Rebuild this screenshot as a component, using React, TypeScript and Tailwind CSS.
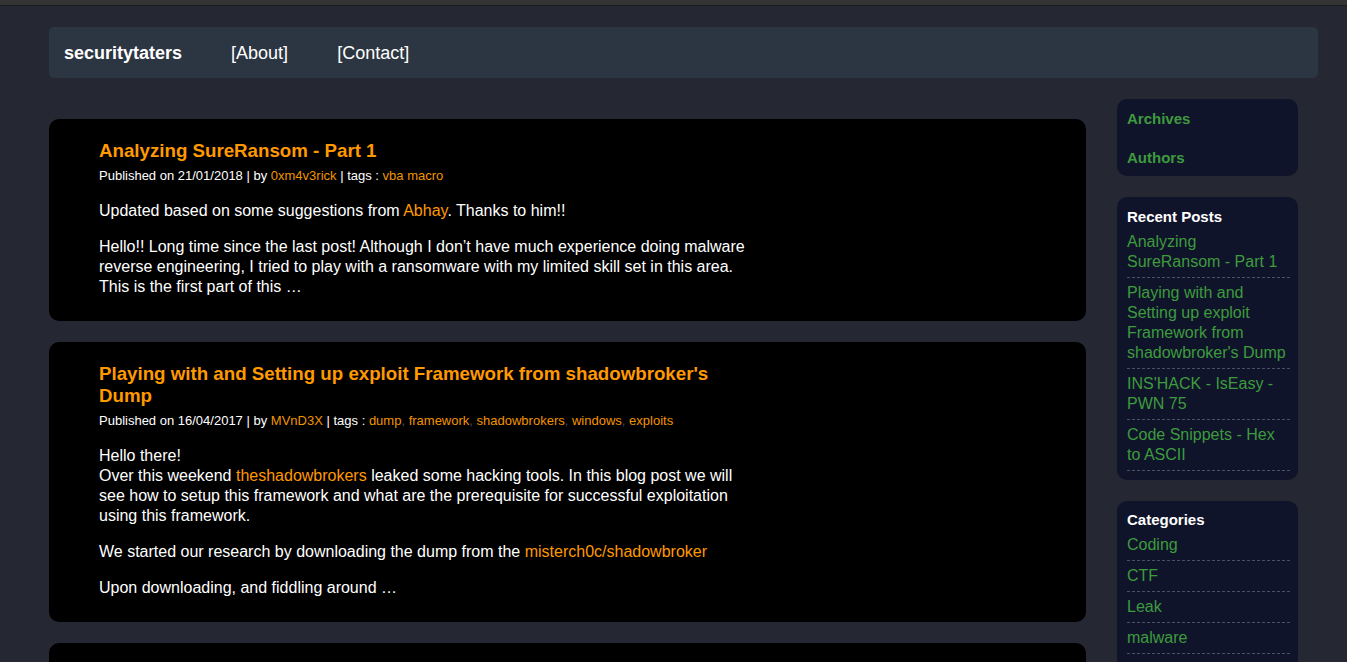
import React from "react";

const font = { fontFamily: '"Liberation Sans", Arial, sans-serif' };

function Tags({ tags }: { tags: string[] }) {
  return (
    <>
      {tags.map((t, i) => (
        <React.Fragment key={t}>
          <span className="text-[#f29400]">{t}</span>
          {i < tags.length - 1 && <span className="text-[#3b4a6b]">, </span>}
        </React.Fragment>
      ))}
    </>
  );
}

function Post({
  title,
  date,
  author,
  tags,
  children,
}: {
  title: string;
  date: string;
  author: string;
  tags: string[];
  children: React.ReactNode;
}) {
  return (
    <article className="bg-black rounded-[10px] pt-[21px] pb-[24px] pl-[50px] pr-[20px]">
      <div className="max-w-[652px]">
        <h3 className="text-[18.72px] leading-[22px] font-bold text-[#ff9900]">{title}</h3>
        <div className="mt-[6px] text-[13px] leading-[16px] text-white">
          Published on {date} | by <span className="text-[#f29400]">{author}</span> | tags :{" "}
          <Tags tags={tags} />
        </div>
        <div className="mt-[17px] flex flex-col gap-[16px] text-[16px] leading-[20px] text-white">
          {children}
        </div>
      </div>
    </article>
  );
}

function SideItem({ children }: { children: React.ReactNode }) {
  return (
    <div className="py-[5px] border-b border-dashed border-[#4a5064] text-[16px] leading-[20px] text-[#3d9b3d]">
      {children}
    </div>
  );
}

export default function App() {
  return (
    <div className="min-h-screen bg-[#252733]" style={font}>
      <div className="h-[6px] bg-[#343434] border-b border-[#1b1b1b]" />
      <div className="pl-[49px] pr-[29px] pt-[21px]">
        <nav className="h-[51px] bg-[#2c3642] rounded-[5px] flex items-center pl-[15px] pt-[2px] gap-[49px] text-white text-[18px]">
          <span className="font-bold">securitytaters</span>
          <span>[About]</span>
          <span>[Contact]</span>
        </nav>
        <div className="flex items-start gap-[31px] mt-[21px]">
          <main className="w-[1037px] flex flex-col gap-[21px] pt-[20px]">
            <Post title="Analyzing SureRansom - Part 1" date="21/01/2018" author="0xm4v3rick" tags={["vba macro"]}>
              <p>
                Updated based on some suggestions from <span className="text-[#ff9900]">Abhay</span>. Thanks to him!!
              </p>
              <p>
                Hello!! Long time since the last post! Although I don’t have much experience doing malware reverse
                engineering, I tried to play with a ransomware with my limited skill set in this area. This is the first
                part of this …
              </p>
            </Post>
            <Post
              title="Playing with and Setting up exploit Framework from shadowbroker's Dump"
              date="16/04/2017"
              author="MVnD3X"
              tags={["dump", "framework", "shadowbrokers", "windows", "exploits"]}
            >
              <p>
                Hello there!
                <br />
                Over this weekend <span className="text-[#ff9900]">theshadowbrokers</span> leaked some hacking tools. In
                this blog post we will see how to setup this framework and what are the prerequisite for successful
                exploitation using this framework.
              </p>
              <p>
                We started our research by downloading the dump from the{" "}
                <span className="text-[#ff9900]">misterch0c/shadowbroker</span>
              </p>
              <p>Upon downloading, and fiddling around …</p>
            </Post>
            <Post title="INS'HACK - IsEasy - PWN 75" date="10/04/2017" author="MVnD3X" tags={["ctf", "pwn"]}>
              <p>Write-up for the IsEasy challenge from INS'HACK …</p>
            </Post>
          </main>
          <aside className="w-[181px] flex flex-col gap-[21px]">
            <div className="bg-[#10142a] rounded-[10px] pl-[10px] pr-[8px] pt-[10px] pb-[8px] flex flex-col gap-[19px] text-[15px] leading-[20px] font-bold text-[#3d9b3d]">
              <span>Archives</span>
              <span>Authors</span>
            </div>
            <div className="bg-[#10142a] rounded-[10px] pl-[10px] pr-[8px] pt-[10px] pb-[9px]">
              <div className="text-[15px] leading-[20px] font-bold text-white">Recent Posts</div>
              <SideItem>Analyzing SureRansom - Part 1</SideItem>
              <SideItem>Playing with and Setting up exploit Framework from shadowbroker's Dump</SideItem>
              <SideItem>INS'HACK - IsEasy - PWN 75</SideItem>
              <SideItem>Code Snippets - Hex to ASCII</SideItem>
            </div>
            <div className="bg-[#10142a] rounded-[10px] pl-[10px] pr-[8px] pt-[9px] pb-[10px]">
              <div className="text-[15px] leading-[20px] font-bold text-white">Categories</div>
              <SideItem>Coding</SideItem>
              <SideItem>CTF</SideItem>
              <SideItem>Leak</SideItem>
              <SideItem>malware</SideItem>
              <SideItem>misc</SideItem>
            </div>
          </aside>
        </div>
      </div>
    </div>
  );
}
